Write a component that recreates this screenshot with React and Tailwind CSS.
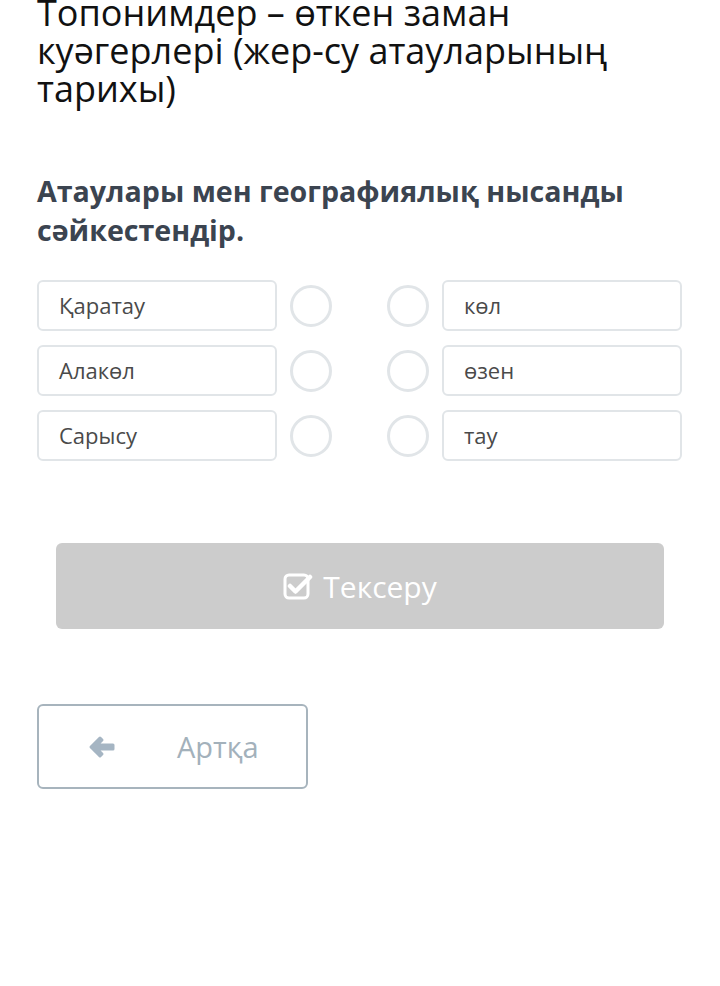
const left = ["Қаратау", "Алакөл", "Сарысу"];
const right = ["көл", "өзен", "тау"];

function CheckSquare() {
  return (
    <svg width="30" height="28" viewBox="0 0 30 28" fill="none">
      <rect x="2" y="3" width="23" height="23" rx="4" stroke="white" strokeWidth="3" />
      <path d="M7 14 L12.5 19.5 L27 5" stroke="white" strokeWidth="4.5" strokeLinecap="round" strokeLinejoin="round" />
    </svg>
  );
}

function ArrowLeft() {
  return (
    <svg width="30" height="26" viewBox="0 0 30 26" fill="none">
      <path
        d="M4 13 L13 4 L15 6 L10 11 L26 11 L26 15 L10 15 L15 20 L13 22 Z"
        fill="#a5b5c3"
        stroke="#a5b5c3"
        strokeWidth="3"
        strokeLinejoin="round"
      />
    </svg>
  );
}

export default function App() {
  return (
    <div className="min-h-[986px] w-[720px] bg-white font-['Open_Sans',sans-serif] overflow-hidden">
      <div className="px-[37px]">
        <h1 className="mt-[-6px] text-[36px] leading-[38px] font-normal text-[#111]">
          Топонимдер – өткен заман куәгерлері (жер-су атауларының тарихы)
        </h1>
        <h2 className="mt-[63px] text-[28.6px] leading-[39px] font-bold text-[#3b4450]">
          Атаулары мен географиялық нысанды сәйкестендір.
        </h2>
        <div className="mt-[31px] flex flex-col gap-[14px]">
          {left.map((l, i) => (
            <div key={l} className="flex items-center">
              <div className="flex h-[51px] w-[240px] items-center rounded-[6px] border-2 border-[#e1e5e8] pl-[20px] text-[22px] text-[#4a4a4a]">
                {l}
              </div>
              <div className="ml-[13px] h-[42px] w-[42px] rounded-full border-[3px] border-[#e1e5e8]" />
              <div className="ml-[55px] h-[42px] w-[42px] rounded-full border-[3px] border-[#e1e5e8]" />
              <div className="ml-[13px] flex h-[51px] w-[240px] items-center rounded-[6px] border-2 border-[#e1e5e8] pl-[20px] text-[22px] text-[#4a4a4a]">
                {right[i]}
              </div>
            </div>
          ))}
        </div>
      </div>
      <div className="mt-[82px] px-[56px]">
        <div className="flex h-[86px] items-center justify-center gap-[10px] rounded-[6px] bg-[#cccccc] text-[30px] text-white">
          <CheckSquare />
          <span>Тексеру</span>
        </div>
      </div>
      <div className="mt-[75px] px-[37px]">
        <div className="flex h-[85px] w-[271px] items-center rounded-[6px] border-2 border-[#a7b4bd] pl-[48px]">
          <ArrowLeft />
          <span className="ml-[60px] text-[29px] text-[#a3b1bb]">Артқа</span>
        </div>
      </div>
    </div>
  );
}
